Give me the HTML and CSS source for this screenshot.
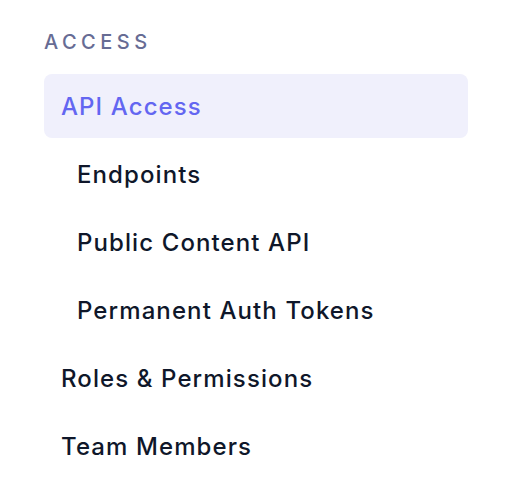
FILE: index.html
```html
<!DOCTYPE html>
<html>
<head>
<meta charset="utf-8">
<link rel="stylesheet" href="styles.css">
</head>
<body>
<nav class="sidebar">
  <div class="section-title">Access</div>
  <ul class="menu">
    <li class="item active">API Access</li>
    <li class="item sub">Endpoints</li>
    <li class="item sub">Public Content API</li>
    <li class="item sub">Permanent Auth Tokens</li>
    <li class="item">Roles &amp; Permissions</li>
    <li class="item">Team Members</li>
  </ul>
</nav>
</body>
</html>
```
FILE: styles.css
```css
html, body {
  margin: 0;
  padding: 0;
  background: #ffffff;
}
body {
  font-family: "Inter", "Liberation Sans", sans-serif;
  -webkit-font-smoothing: antialiased;
}
.sidebar {
  width: 424px;
  padding: 28px 0 0 44px;
}
.section-title {
  text-transform: uppercase;
  font-size: 20px;
  font-weight: 500;
  letter-spacing: 4.5px;
  color: #676c94;
  line-height: 28px;
  margin-bottom: 18px;
}
.menu {
  list-style: none;
  margin: 0;
  padding: 0;
  display: flex;
  flex-direction: column;
  gap: 4px;
}
.item {
  height: 64px;
  display: flex;
  align-items: center;
  padding: 0 17px;
  border-radius: 8px;
  font-size: 24px;
  font-weight: 450;
  letter-spacing: 1.1px;
  color: #0f172a;
}
.item.sub {
  padding-left: 33px;
}
.item.active {
  background: #f0f0fc;
  color: #6366f1;
}
```
